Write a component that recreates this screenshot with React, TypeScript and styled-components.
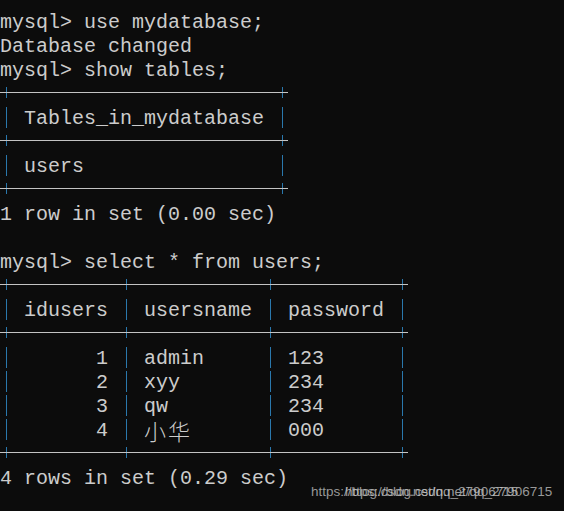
import React from "react";
import styled, { createGlobalStyle } from "styled-components";

const Global = createGlobalStyle`
  html, body {
    margin: 0;
    padding: 0;
    background: #0c0c0c;
  }
  #root {
    min-height: 511px;
  }
`;

const Console = styled.div`
  position: relative;
  width: 564px;
  height: 511px;
  box-sizing: border-box;
  padding-top: 11px;
  background: #0c0c0c;
  color: #cccccc;
  font-family: "Liberation Mono", "DejaVu Sans Mono", monospace;
  font-size: 20px;
  line-height: 24px;
  overflow: hidden;
`;

const Line = styled.div`
  height: 24px;
  white-space: pre;
`;

const Pipe = styled.span`
  display: inline-block;
  width: 12px;
  height: 24px;
  vertical-align: top;
  color: transparent;
  background: linear-gradient(#2a78ad, #2a78ad) 6px -2px / 1px 23px no-repeat;
`;

const Dash = styled.span`
  display: inline-block;
  height: 24px;
  vertical-align: top;
  color: transparent;
  background: linear-gradient(#c4c4c4, #c4c4c4) 0 9px / 100% 1px no-repeat;
`;

const Plus = styled.span`
  display: inline-block;
  width: 12px;
  height: 24px;
  vertical-align: top;
  color: transparent;
  background:
    linear-gradient(#c4c4c4, #c4c4c4) 0 9px / 12px 1px no-repeat,
    linear-gradient(#2a78ad, #2a78ad) 6px 4px / 1px 11px no-repeat;
`;

const Wide = styled.span`
  display: inline-block;
  height: 24px;
  vertical-align: top;
  font-family: "Noto Sans CJK SC", sans-serif;
  font-size: 22px;
  line-height: 22px;
  letter-spacing: 2px;
  text-align: left;
  font-weight: 300;
`;

const Watermark = styled.div`
  position: absolute;
  left: 311px;
  top: 484px;
  font-family: "Liberation Sans", Arial, sans-serif;
  font-size: 13.5px;
  line-height: 16px;
  color: rgba(200, 200, 200, 0.75);
  white-space: nowrap;
`;

const WatermarkEcho = styled.span`
  position: absolute;
  left: 34px;
  top: 0;
`;

const lines: string[] = [
  "mysql> use mydatabase;",
  "Database changed",
  "mysql> show tables;",
  "+----------------------+",
  "| Tables_in_mydatabase |",
  "+----------------------+",
  "| users                |",
  "+----------------------+",
  "1 row in set (0.00 sec)",
  "",
  "mysql> select * from users;",
  "+---------+-----------+----------+",
  "| idusers | usersname | password |",
  "+---------+-----------+----------+",
  "|       1 | admin     | 123      |",
  "|       2 | xyy       | 234      |",
  "|       3 | qw        | 234      |",
  "|       4 | 小华      | 000      |",
  "+---------+-----------+----------+",
  "4 rows in set (0.29 sec)",
];

function renderLine(text: string) {
  const isBorder = /^\+[-+]+\+$/.test(text);
  const tokens = text.match(/\||\++|-+|[\u4e00-\u9fff]+|[^|+\-\u4e00-\u9fff]+/g) || [];
  return tokens.map((t, i) => {
    if (t === "|") return <Pipe key={i}>|</Pipe>;
    if (isBorder && /^\+$/.test(t)) return <Plus key={i}>+</Plus>;
    if (isBorder && /^-+$/.test(t))
      return (
        <Dash key={i} style={{ width: `${t.length * 12}px` }}>
          {t}
        </Dash>
      );
    if (/[\u4e00-\u9fff]/.test(t))
      return (
        <Wide key={i} style={{ width: `${t.length * 24}px` }}>
          {t}
        </Wide>
      );
    return <React.Fragment key={i}>{t}</React.Fragment>;
  });
}

export default function App() {
  return (
    <>
      <Global />
      <Console>
        {lines.map((l, i) => (
          <Line key={i}>{l === "" ? " " : renderLine(l)}</Line>
        ))}
        <Watermark>
          https://blog.csdn.net/qq_27906715
          <WatermarkEcho>https://blog.csdn.net/qq_27906715</WatermarkEcho>
        </Watermark>
      </Console>
    </>
  );
}
